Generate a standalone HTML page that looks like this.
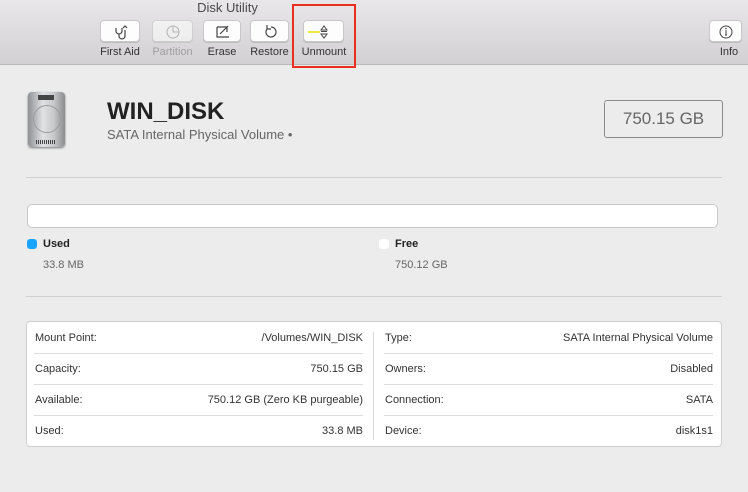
<!DOCTYPE html>
<html><head><style>
*{margin:0;padding:0;box-sizing:border-box}
body{width:748px;height:492px;background:#ececec;font-family:"Liberation Sans",sans-serif;position:relative;overflow:hidden;color:#222}
.tb{position:absolute;left:0;top:0;width:748px;height:65px;background:linear-gradient(#e9e7e9,#d2d0d2);border-bottom:1px solid #b9b9b9}
.title{position:absolute;top:0;left:0;width:455px;text-align:center;font-size:13px;color:#4a4a4a}
.btn{position:absolute;top:20px;height:22px;background:#fdfdfd;border:1px solid #c8c8c8;border-radius:4px;box-shadow:0 1px 0 #bdbdbd}
.lbl{position:absolute;top:46px;font-size:11px;color:#333;text-align:center}
.a{position:absolute}
.row{position:absolute;font-size:11px;color:#333}
.sep{position:absolute;height:1px;background:#dcdcdc}
</style></head><body>
<div class="tb">
<div class="title">Disk Utility</div>
<div class="btn" style="left:100px;width:40px"><svg width="40" height="22"><path d="M15 7v3a3 3 0 0 0 6 0V7M18 13v2a3 3 0 0 0 6 0V9M22 7l2-2 2 2" stroke="#444" fill="none" stroke-width="1.2"/></svg></div>
<div class="lbl" style="left:92px;width:56px">First Aid</div>
<div class="btn" style="left:152px;width:41px;opacity:.6"><svg width="41" height="22"><circle cx="20" cy="11" r="6" stroke="#999" fill="none"/><path d="M20 5v6h6" stroke="#999" fill="none"/></svg></div>
<div class="lbl" style="left:144px;width:57px;color:#a0a0a0">Partition</div>
<div class="btn" style="left:203px;width:38px"><svg width="38" height="22"><path d="M13 6h10v5M13 6v10h12M16 13l8-8" stroke="#444" fill="none" stroke-width="1.2"/></svg></div>
<div class="lbl" style="left:200px;width:44px">Erase</div>
<div class="btn" style="left:250px;width:39px"><svg width="39" height="22"><path d="M16 8a5 5 0 1 0 4-2M16 4v4h4" stroke="#444" fill="none" stroke-width="1.2"/></svg></div>
<div class="lbl" style="left:245px;width:49px">Restore</div>
<div class="btn" style="left:303px;width:41px"><svg width="41" height="22"><path d="M17 9l3-4 3 4zM17 13l3 4 3-4zM17 10.5h6" stroke="#444" fill="none"/><path d="M4 11h12" stroke="#e8e000" stroke-width="1.5"/></svg></div>
<div class="lbl" style="left:296px;width:56px">Unmount</div>
<div class="btn" style="left:709px;width:33px"><svg width="33" height="22"><circle cx="16" cy="11" r="6" stroke="#444" fill="none"/><path d="M16 9v5M15 14h2" stroke="#444"/><circle cx="16" cy="7.5" r=".8" fill="#444"/></svg></div>
<div class="lbl" style="left:712px;width:34px">Info</div>
</div>
<div class="a" style="left:292px;top:4px;width:64px;height:64px;border:2px solid #e8301f"></div>
<div class="a" style="left:28px;top:92px;width:37px;height:55px;border-radius:4px;background:linear-gradient(90deg,#8e9194,#dfe1e3 40%,#c6c8ca 70%,#8a8c8e);box-shadow:0 1px 2px #777"><div class="a" style="left:5px;top:13px;width:28px;height:28px;border-radius:50%;border:1px solid #9a9c9e"></div><div class="a" style="left:10px;top:3px;width:16px;height:5px;background:#444"></div><div class="a" style="left:8px;top:48px;width:20px;height:4px;background:repeating-linear-gradient(90deg,#444 0 1px,transparent 1px 2px)"></div></div>
<div class="a" style="left:107px;top:98px;font-size:24px;font-weight:bold;color:#222">WIN_DISK</div>
<div class="a" style="left:107px;top:127px;font-size:13px;color:#666">SATA Internal Physical Volume •</div>
<div class="a" style="left:604px;top:100px;width:119px;height:38px;border:1px solid #8a8a8a;border-radius:3px;font-size:17px;color:#666;text-align:center;line-height:36px">750.15 GB</div>
<div class="sep" style="left:26px;top:177px;width:696px;background:#d0d0d0"></div>
<div class="a" style="left:27px;top:204px;width:691px;height:24px;background:#fff;border:1px solid #c8c8c8;border-radius:5px"></div>
<div class="a" style="left:27px;top:239px;width:10px;height:10px;border-radius:3px;background:#1aa4ff"></div>
<div class="a" style="left:43px;top:238px;font-size:11px;font-weight:bold">Used</div>
<div class="a" style="left:43px;top:259px;font-size:11px;color:#666">33.8 MB</div>
<div class="a" style="left:379px;top:239px;width:10px;height:10px;border-radius:3px;background:#fff"></div>
<div class="a" style="left:395px;top:238px;font-size:11px;font-weight:bold">Free</div>
<div class="a" style="left:395px;top:259px;font-size:11px;color:#666">750.12 GB</div>
<div class="sep" style="left:26px;top:296px;width:696px;background:#d0d0d0"></div>
<div class="a" style="left:26px;top:321px;width:696px;height:126px;background:#fff;border:1px solid #cfcfcf;border-radius:4px"></div>
<div class="a" style="left:373px;top:332px;width:1px;height:108px;background:#d8d8d8"></div>
<div class="sep" style="left:34px;top:353px;width:329px"></div><div class="sep" style="left:34px;top:384px;width:329px"></div><div class="sep" style="left:34px;top:415px;width:329px"></div>
<div class="sep" style="left:384px;top:353px;width:329px"></div><div class="sep" style="left:384px;top:384px;width:329px"></div><div class="sep" style="left:384px;top:415px;width:329px"></div>
<div class="row" style="left:35px;top:332px">Mount Point:</div><div class="row" style="right:385px;top:332px">/Volumes/WIN_DISK</div>
<div class="row" style="left:35px;top:363px">Capacity:</div><div class="row" style="right:385px;top:363px">750.15 GB</div>
<div class="row" style="left:35px;top:394px">Available:</div><div class="row" style="right:385px;top:394px">750.12 GB (Zero KB purgeable)</div>
<div class="row" style="left:35px;top:425px">Used:</div><div class="row" style="right:385px;top:425px">33.8 MB</div>
<div class="row" style="left:385px;top:332px">Type:</div><div class="row" style="right:35px;top:332px">SATA Internal Physical Volume</div>
<div class="row" style="left:385px;top:363px">Owners:</div><div class="row" style="right:35px;top:363px">Disabled</div>
<div class="row" style="left:385px;top:394px">Connection:</div><div class="row" style="right:35px;top:394px">SATA</div>
<div class="row" style="left:385px;top:425px">Device:</div><div class="row" style="right:35px;top:425px">disk1s1</div>
</body></html>
